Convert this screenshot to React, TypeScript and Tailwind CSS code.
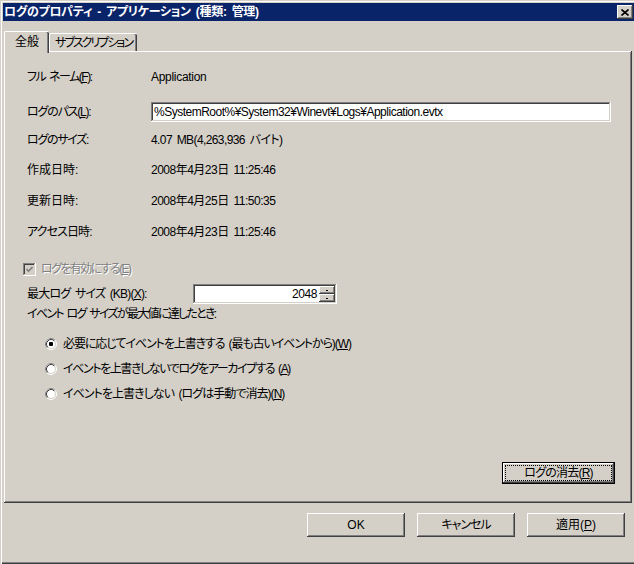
import React from "react";

const FONT =
  "[font-family:'Liberation_Sans','Noto_Sans_CJK_JP',sans-serif] [font-feature-settings:'palt'] [word-spacing:2px]";
const RAISED =
  "shadow-[inset_-1px_-1px_#404040,inset_1px_1px_#ffffff,inset_-2px_-2px_#808080,inset_2px_2px_#d4d0c8]";
const SUNKEN =
  "shadow-[inset_-1px_-1px_#ffffff,inset_1px_1px_#808080,inset_-2px_-2px_#d4d0c8,inset_2px_2px_#404040]";

function Radio({ checked }: { checked?: boolean }) {
  return (
    <svg width="12" height="12" viewBox="0 0 12 12" className="shrink-0">
      <circle cx="6" cy="6" r="5" fill="#ffffff" />
      <circle cx="6" cy="6" r="5.5" fill="none" stroke="#ffffff" strokeWidth="1" />
      <path d="M2.11 9.89 A5.5 5.5 0 0 1 9.89 2.11" fill="none" stroke="#808080" strokeWidth="1" />
      <circle cx="6" cy="6" r="4.5" fill="none" stroke="#d4d0c8" strokeWidth="1" />
      <path d="M2.82 9.18 A4.5 4.5 0 0 1 9.18 2.82" fill="none" stroke="#404040" strokeWidth="1" />
      {checked && <rect x="4" y="4" width="4" height="4" rx="1" fill="#000000" />}
    </svg>
  );
}

function Row({
  label,
  children,
  mt,
  lt,
}: {
  label: React.ReactNode;
  children: React.ReactNode;
  mt: string;
  lt: string;
}) {
  return (
    <div className={`flex h-[20px] items-center ${mt}`}>
      <div className={`w-[124px] shrink-0 whitespace-nowrap ${lt}`}>{label}</div>
      {children}
    </div>
  );
}

export default function App() {
  return (
    <div
      className={`${FONT} relative flex h-[564px] w-[634px] flex-col overflow-hidden bg-[#d4d0c8] pl-[3px] pt-[3px] text-[12px] leading-none text-black shadow-[inset_1px_1px_#d4d0c8,inset_2px_2px_#ffffff,inset_0_-1px_#404040,inset_0_-2px_#808080]`}
    >
      {/* Title bar */}
      <div className="flex h-[18px] items-center justify-between bg-[#0a246a]">
        <div className="whitespace-nowrap pl-[1px] text-[12px] font-bold tracking-[-0.3px] text-white">
          ログのプロパティ - アプリケーション (種類: 管理)
        </div>
        <div className={`mr-[1px] flex h-[14px] w-[16px] items-center justify-center bg-[#d4d0c8] ${RAISED}`}>
          <svg width="8" height="7" viewBox="0 0 8 7">
            <path d="M0.5 0.5 L7.5 6.5 M7.5 0.5 L0.5 6.5" stroke="#000" strokeWidth="1.6" />
          </svg>
        </div>
      </div>

      {/* Tabs */}
      <div className="ml-[1px] mt-[10px] flex h-[20px] items-end">
        <div className="relative z-10 -mb-[2px] flex h-[22px] w-[45px] items-start justify-center whitespace-nowrap rounded-t-[2px] border-l border-t border-white bg-[#d4d0c8] pt-[4px] shadow-[inset_-1px_0_#404040,inset_-2px_0_#808080]">
          全般
        </div>
        <div className="flex h-[18px] w-[88px] items-start justify-center whitespace-nowrap rounded-t-[2px] border-l border-t border-white bg-[#d4d0c8] pt-[3px] tracking-[-2px] shadow-[inset_-1px_0_#404040,inset_-2px_0_#808080]">
          サブスクリプション
        </div>
      </div>

      {/* Panel */}
      <div className="ml-[1px] mr-[2px] flex h-[452px] flex-col bg-[#d4d0c8] pl-[23px] pt-[16px] shadow-[inset_-1px_-1px_#404040,inset_1px_1px_#ffffff,inset_-2px_-2px_#808080]">
        <Row mt="mt-0" lt="tracking-[-1.5px]" label={<>フル ネーム(<u>F</u>):</>}>
          <span className="tracking-[-0.3px]">Application</span>
        </Row>
        <Row mt="mt-[15px]" lt="tracking-[-1.2px]" label={<>ログのパス(<u>L</u>):</>}>
          <div
            className={`flex h-[20px] w-[460px] items-center whitespace-nowrap bg-white pl-[3px] tracking-[-0.5px] ${SUNKEN}`}
          >
            %SystemRoot%¥System32¥Winevt¥Logs¥Application.evtx
          </div>
        </Row>
        <Row mt="mt-[8px]" lt="tracking-[-1.3px]" label="ログのサイズ:">
          <span className="tracking-[-0.6px]">4.07 MB(4,263,936 バイト)</span>
        </Row>
        <Row mt="mt-[10px]" lt="tracking-[0px]" label="作成日時:">
          <span className="tracking-[-0.5px]">2008年4月23日 11:25:46</span>
        </Row>
        <Row mt="mt-[11px]" lt="tracking-[0px]" label="更新日時:">
          <span className="tracking-[-0.5px]">2008年4月25日 11:50:35</span>
        </Row>
        <Row mt="mt-[11px]" lt="tracking-[-0.9px]" label="アクセス日時:">
          <span className="tracking-[-0.5px]">2008年4月23日 11:25:46</span>
        </Row>

        {/* enable checkbox */}
        <div className="-ml-[4px] mt-[17px] flex h-[20px] items-center gap-[5px]">
          <div className={`flex h-[13px] w-[13px] items-center justify-center bg-[#d4d0c8] ${SUNKEN}`}>
            <svg width="7" height="7" viewBox="0 0 7 7">
              <path d="M0.5 3 L2.5 5 L6.5 1" fill="none" stroke="#808080" strokeWidth="1.6" />
            </svg>
          </div>
          <span className="whitespace-nowrap tracking-[-1.6px] text-[#808080] [text-shadow:1px_1px_0_#ffffff]">
            ログを有効にする(<u>E</u>)
          </span>
        </div>

        {/* max size */}
        <div className="mt-[5px] flex h-[20px] items-center">
          <div className="w-[166px] shrink-0 whitespace-nowrap tracking-[-0.8px]">
            最大ログ サイズ (KB)(<u>X</u>):
          </div>
          <div className={`flex h-[20px] w-[144px] items-center justify-end bg-white pr-[2px] ${SUNKEN}`}>
            <span className="pr-[2px] tracking-[-0.4px]">2048</span>
            <div className="flex h-[16px] w-[16px] flex-col">
              <div className={`flex h-[8px] items-center justify-center bg-[#d4d0c8] ${RAISED}`}>
                <div className="h-[1px] w-[2px] bg-black" />
              </div>
              <div className={`flex h-[8px] items-center justify-center bg-[#d4d0c8] ${RAISED}`}>
                <div className="h-[1px] w-[2px] bg-black" />
              </div>
            </div>
          </div>
        </div>

        <div className="flex h-[20px] items-center whitespace-nowrap tracking-[-1.7px]">
          イベント ログ サイズが最大値に達したとき:
        </div>

        <div className="ml-[18px] mt-[10px] flex h-[20px] items-center gap-[6px]">
          <Radio checked />
          <span className="whitespace-nowrap tracking-[-1.1px]">
            必要に応じてイベントを上書きする (最も古いイベントから)(<u>W</u>)
          </span>
        </div>
        <div className="ml-[18px] mt-[5px] flex h-[20px] items-center gap-[6px]">
          <Radio />
          <span className="whitespace-nowrap tracking-[-1.4px]">
            イベントを上書きしないでログをアーカイブする (<u>A</u>)
          </span>
        </div>
        <div className="ml-[18px] mt-[5px] flex h-[20px] items-center gap-[6px]">
          <Radio />
          <span className="whitespace-nowrap tracking-[-0.95px]">
            イベントを上書きしない (ログは手動で消去)(<u>N</u>)
          </span>
        </div>

        <div className="mr-[17px] mt-[58px] flex justify-end">
          <div className="flex h-[22px] w-[113px] border border-black bg-[#d4d0c8] p-0">
            <div className={`flex flex-1 p-[3px] ${RAISED}`}>
              <div className="flex flex-1 items-center justify-center whitespace-nowrap tracking-[-0.8px] outline outline-1 outline-dotted outline-black">
                ログの消去(<u>R</u>)
              </div>
            </div>
          </div>
        </div>
      </div>

      {/* Bottom buttons */}
      <div className="mt-[10px] flex justify-end gap-[12px] pr-[9px]">
        {[
          <>OK</>,
          <span className="tracking-[-1px]">キャンセル</span>,
          <>
            適用(<u>P</u>)
          </>,
        ].map((t, i) => (
          <div
            key={i}
            className={`flex h-[24px] w-[98px] items-center justify-center whitespace-nowrap bg-[#d4d0c8] ${RAISED}`}
          >
            {t}
          </div>
        ))}
      </div>
    </div>
  );
}
